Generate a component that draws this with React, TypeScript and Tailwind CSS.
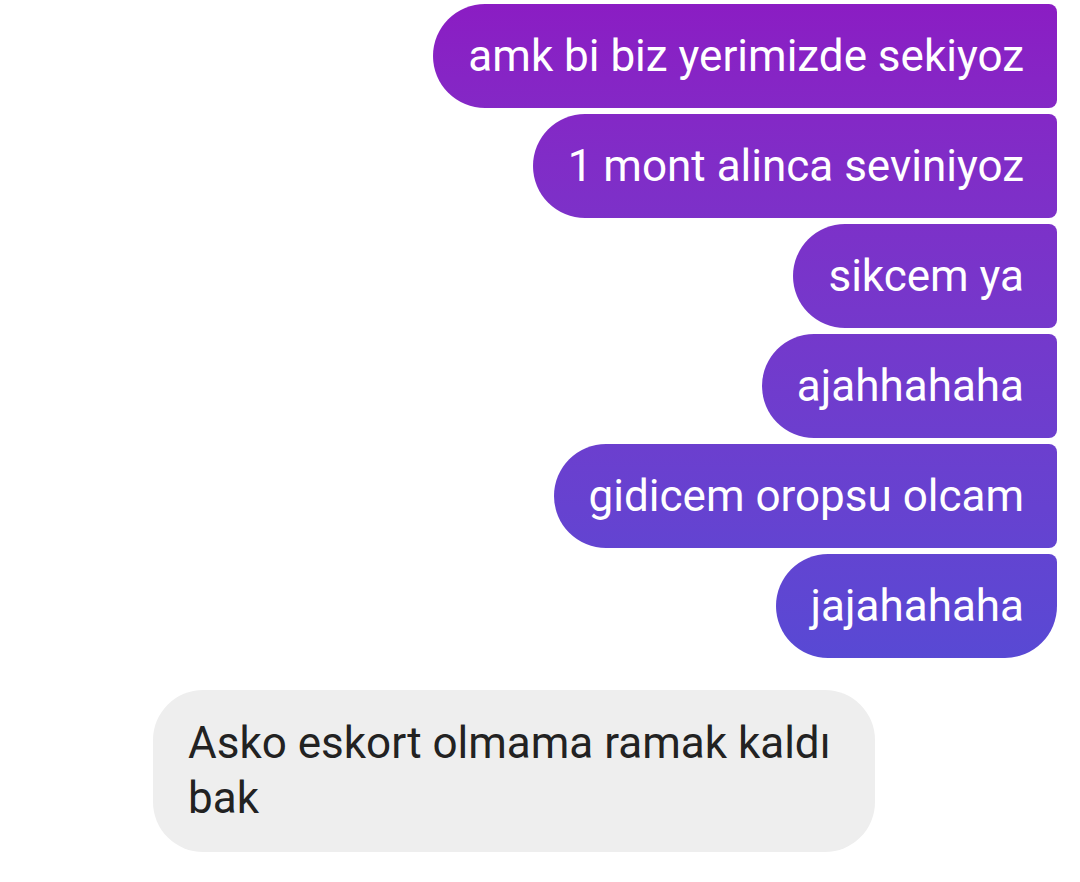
import React from "react";

const sent = [
  "amk bi biz yerimizde sekiyoz",
  "1 mont alinca seviniyoz",
  "sikcem ya",
  "ajahhahaha",
  "gidicem oropsu olcam",
  "jajahahaha",
];

export default function App() {
  return (
    <div
      className="w-[1080px] h-[882px] bg-white overflow-hidden"
      style={{ fontFamily: "Roboto, 'Noto Sans', sans-serif" }}
    >
      <div className="flex flex-col items-end gap-[6px] pt-[4px] pr-[23px]">
        {sent.map((t, i) => (
          <div
            key={i}
            className={
              "h-[104px] flex items-center pl-[35px] pr-[33px] text-[44px] leading-none text-white bg-fixed bg-linear-to-b from-[#8b1cc3] to-[#5849d4] to-75% " +
              (i === sent.length - 1
                ? "rounded-l-[52px] rounded-tr-[8px] rounded-br-[52px]"
                : "rounded-l-[52px] rounded-r-[8px]")
            }
          >
            {t}
          </div>
        ))}
      </div>
      <div className="pl-[153px] pt-[32px]">
        <div className="w-[722px] bg-[#eeeeee] rounded-[50px] px-[35px] py-[26px] text-[44px] leading-[55px] text-[#222222]">
          Asko eskort olmama ramak kaldı bak
        </div>
      </div>
    </div>
  );
}
